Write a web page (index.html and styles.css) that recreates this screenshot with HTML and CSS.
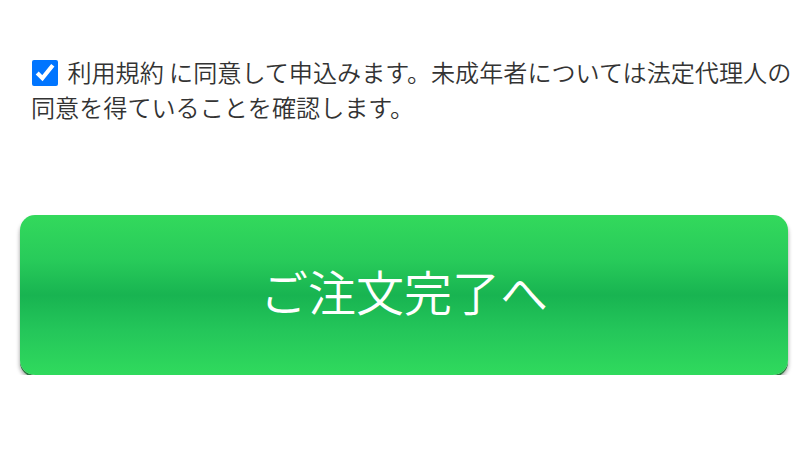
FILE: index.html
```html
<!DOCTYPE html>
<html lang="ja">
<head>
<meta charset="utf-8">
<link rel="stylesheet" href="styles.css">
</head>
<body>
<div class="page">
  <label class="agree">
    <input type="checkbox" class="check" checked>
    <span>利用規約 に同意して申込みます。未成年者については法定代理人の同意を得ていることを確認します。</span>
  </label>
  <button class="submit" type="button">ご注文完了へ</button>
</div>
</body>
</html>
```
FILE: styles.css
```css
html, body {
  margin: 0;
  padding: 0;
  background: #ffffff;
}
.page {
  padding: 54px 0 0 20px;
  font-family: "Noto Sans CJK JP", "Noto Sans", sans-serif;
}
.agree {
  display: block;
  padding-left: 11px;
  font-size: 24.1px;
  line-height: 35px;
  font-weight: 350;
  color: #333333;
}
.check {
  width: 26px;
  height: 26px;
  margin: 0 4px 0 1px;
  vertical-align: -4px;
  accent-color: #0075ff;
}
.submit {
  display: block;
  width: 768px;
  height: 160px;
  margin-top: 91px;
  border: none;
  border-radius: 15px;
  background: linear-gradient(to bottom, #33d95c 0%, #28cb5a 28%, #18b451 50%, #24c65a 72%, #30da5d 100%);
  box-shadow: 0 2px 0 #2a7a3e, 0 4px 4px rgba(0,0,0,0.4);
  color: #ffffff;
  font-family: "Noto Sans CJK JP", "Noto Sans", sans-serif;
  font-size: 48px;
  font-weight: 350;
  padding: 0 0 10px 0;
}
```
